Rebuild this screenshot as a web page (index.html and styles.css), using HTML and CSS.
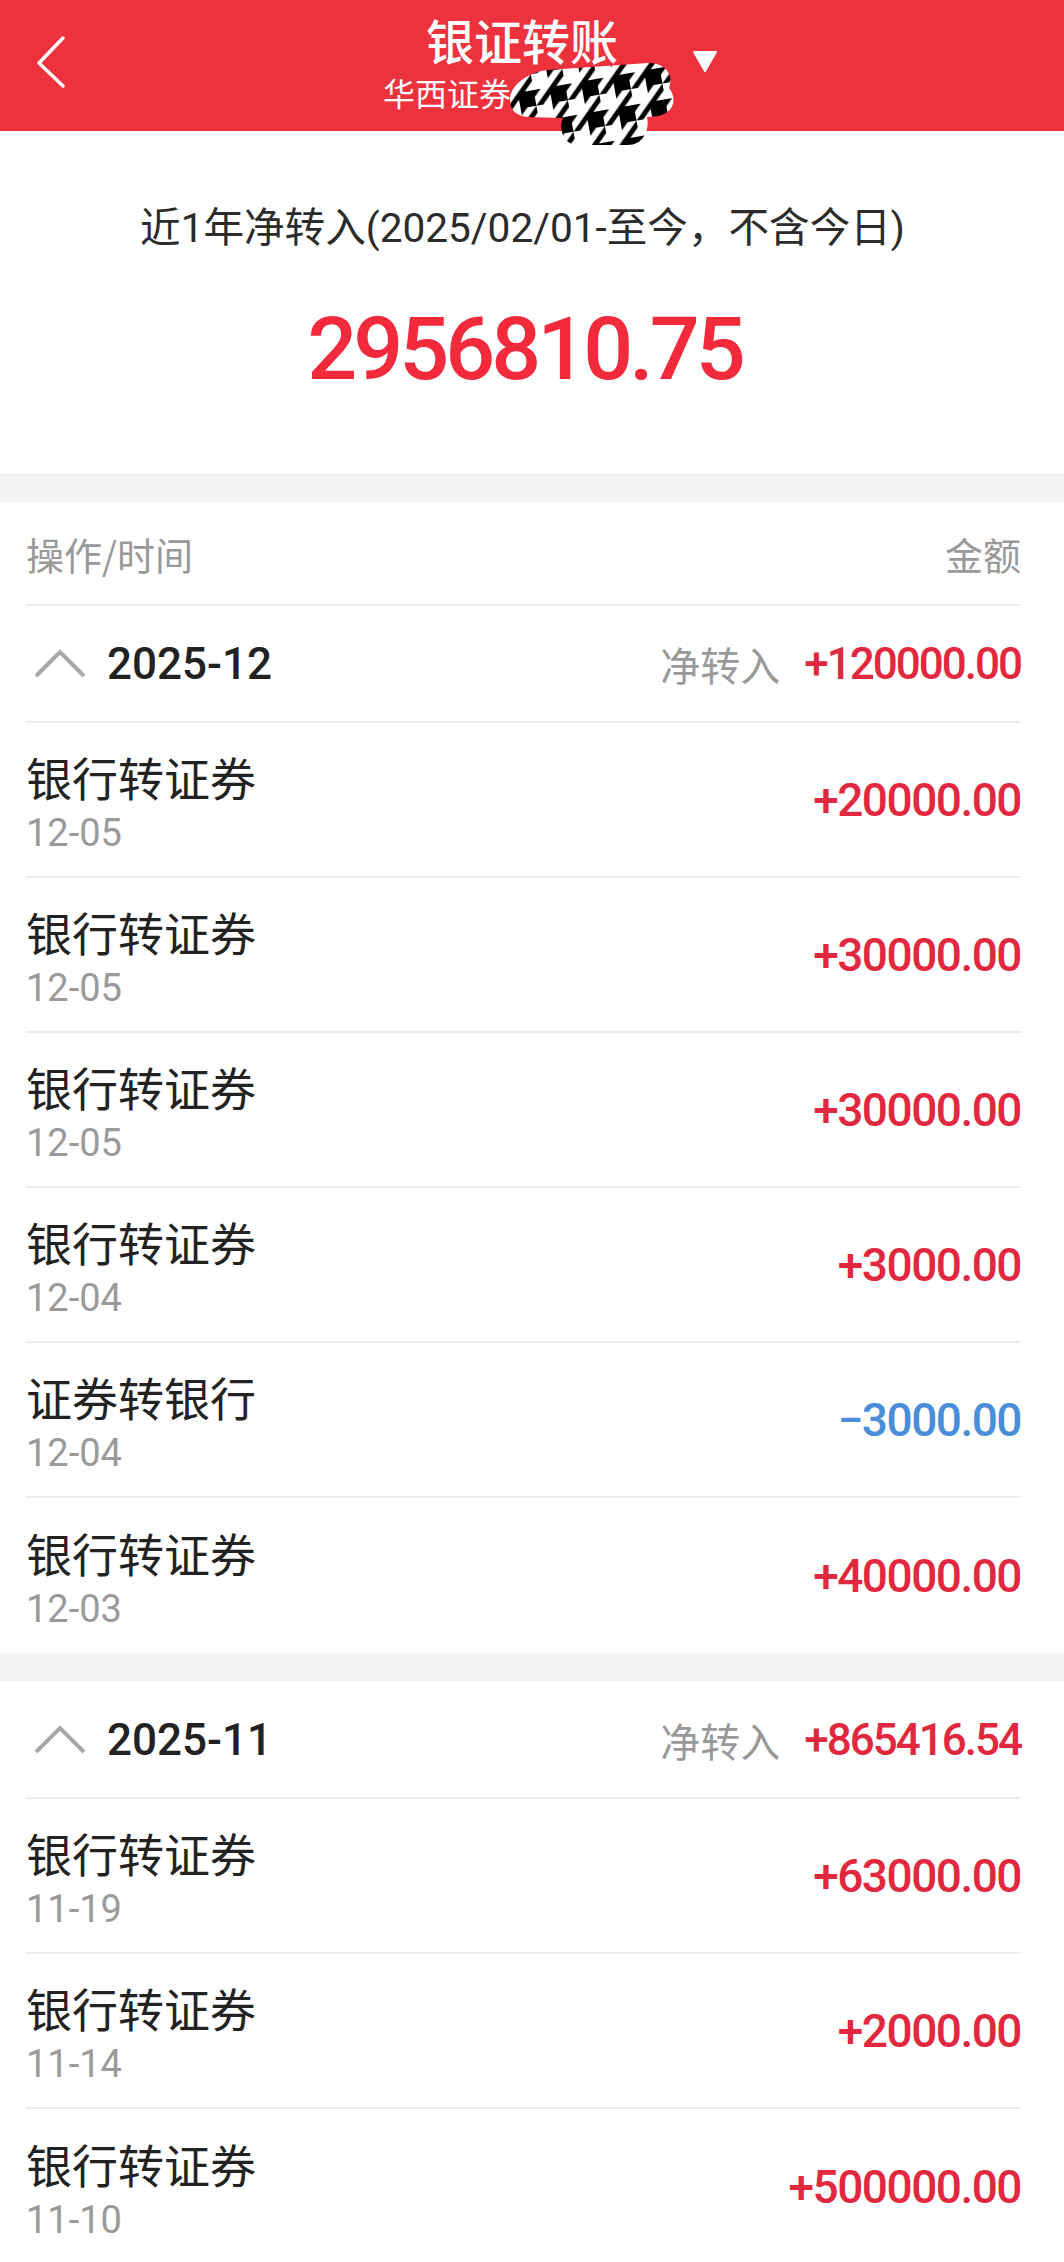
FILE: index.html
```html
<!DOCTYPE html>
<html lang="zh-CN">
<head>
<meta charset="utf-8">
<title>银证转账</title>
<link rel="stylesheet" href="styles.css">
</head>
<body>
<header class="topbar">
  <div class="topbar-left">
    <svg class="back" width="40" height="60" viewBox="0 0 40 60"><polyline points="31,3 7,28 31,51" fill="none" stroke="#fff" stroke-width="3.5" stroke-linecap="round" stroke-linejoin="round"/></svg>
  </div>
  <div class="topbar-center">
    <div class="title-col">
      <div class="title">银证转账</div>
      <div class="subtitle">华西证券<span class="redact"><svg class="redact-art" width="170" height="90" viewBox="0 0 170 90">
        <defs>
          <pattern id="hound" width="32" height="32" patternUnits="userSpaceOnUse" patternTransform="rotate(-10) translate(4 2)">
            <rect width="32" height="32" fill="#fff"/>
            <rect x="0" y="0" width="16" height="16" fill="#000"/>
            <polygon points="16,16 32,0 32,7 23,16" fill="#000"/>
            <polygon points="16,0 23,0 16,7" fill="#000"/>
            <polygon points="0,32 16,16 16,23 7,32" fill="#000"/>
            <polygon points="0,16 7,16 0,23" fill="#000"/>
          </pattern>
          <clipPath id="blob">
            <path d="M 2 40 C 2 25, 20 12, 40 10 L 140 3 C 158 3, 166 15, 161 28 C 169 38, 167 52, 150 56 L 139 57 C 142 70, 135 85, 120 85 L 70 85 C 56 85, 50 70, 55 58 L 20 57 C 8 56, 2 50, 2 40 Z"/>
          </clipPath>
        </defs>
        <rect width="170" height="90" fill="url(#hound)" clip-path="url(#blob)"/>
      </svg></span></div>
    </div>
    <svg class="caret" width="26" height="23" viewBox="0 0 26 23"><polygon points="2,2 24,2 13,21" fill="#fff" stroke="#fff" stroke-width="2" stroke-linejoin="round"/></svg>
  </div>
  <div class="topbar-right"></div>
</header>

<section class="summary">
  <div class="summary-label">近1年净转入(2025/02/01-至今，不含今日)</div>
  <div class="summary-value">2956810.75</div>
</section>

<div class="gap"></div>

<section class="list">
  <div class="list-head">
    <span>操作/时间</span>
    <span>金额</span>
  </div>
  <div class="group-head">
    <div class="group-left">
      <svg class="fold" width="52" height="30" viewBox="0 0 52 30"><polyline points="2,27 26,3 50,27" fill="none" stroke="#a8a8a8" stroke-width="4"/></svg>
      <span class="month">2025-12</span>
    </div>
    <div class="group-right">
      <span class="net-label">净转入</span>
      <span class="net-value up">+120000.00</span>
    </div>
  </div>
  <div class="row">
    <div class="row-left"><div class="op">银行转证券</div><div class="date">12-05</div></div>
    <div class="amount up">+20000.00</div>
  </div>
  <div class="row">
    <div class="row-left"><div class="op">银行转证券</div><div class="date">12-05</div></div>
    <div class="amount up">+30000.00</div>
  </div>
  <div class="row">
    <div class="row-left"><div class="op">银行转证券</div><div class="date">12-05</div></div>
    <div class="amount up">+30000.00</div>
  </div>
  <div class="row">
    <div class="row-left"><div class="op">银行转证券</div><div class="date">12-04</div></div>
    <div class="amount up">+3000.00</div>
  </div>
  <div class="row">
    <div class="row-left"><div class="op">证券转银行</div><div class="date">12-04</div></div>
    <div class="amount down">−3000.00</div>
  </div>
  <div class="row">
    <div class="row-left"><div class="op">银行转证券</div><div class="date">12-03</div></div>
    <div class="amount up">+40000.00</div>
  </div>
</section>

<div class="gap"></div>

<section class="list">
  <div class="group-head">
    <div class="group-left">
      <svg class="fold" width="52" height="30" viewBox="0 0 52 30"><polyline points="2,27 26,3 50,27" fill="none" stroke="#a8a8a8" stroke-width="4"/></svg>
      <span class="month">2025-11</span>
    </div>
    <div class="group-right">
      <span class="net-label">净转入</span>
      <span class="net-value up">+865416.54</span>
    </div>
  </div>
  <div class="row">
    <div class="row-left"><div class="op">银行转证券</div><div class="date">11-19</div></div>
    <div class="amount up">+63000.00</div>
  </div>
  <div class="row">
    <div class="row-left"><div class="op">银行转证券</div><div class="date">11-14</div></div>
    <div class="amount up">+2000.00</div>
  </div>
  <div class="row">
    <div class="row-left"><div class="op">银行转证券</div><div class="date">11-10</div></div>
    <div class="amount up">+500000.00</div>
  </div>
</section>
</body>
</html>
```

FILE: styles.css
```css
* { box-sizing: border-box; }

html, body {
  margin: 0;
  padding: 0;
  background: #fff;
}

body {
  font-family: Roboto, "Noto Sans CJK SC", sans-serif;
  color: #222;
}

/* ---------- top bar ---------- */
.topbar {
  position: relative;
  z-index: 2;
  height: 131px;
  background: #ee323d;
  display: grid;
  grid-template-columns: 1fr auto 1fr;
  align-items: start;
}

.topbar-left {
  padding: 35px 0 0 32px;
}

.back { display: block; }

.topbar-center {
  margin-left: 31px;
  display: flex;
  align-items: flex-start;
}

.title-col {
  width: 290px;
  text-align: center;
  color: #fff;
}

.title {
  margin-top: 11px;
  font-family: "Noto Sans CJK SC", sans-serif;
  font-size: 48px;
  font-weight: 500;
  line-height: 56px;
}

.subtitle {
  margin-top: 5px;
  font-family: "Noto Sans CJK SC", sans-serif;
  font-size: 32px;
  line-height: 40px;
  white-space: nowrap;
}

.redact {
  position: relative;
  display: inline-block;
  width: 150px;
  height: 40px;
  vertical-align: top;
}

.redact-art {
  position: absolute;
  left: -3px;
  top: -12px;
  display: block;
}

.caret {
  display: block;
  margin: 50px 0 0 25px;
}

/* ---------- summary ---------- */
.summary {
  height: 342px;
  padding: 72px 19px 0 0;
  text-align: center;
}

.summary-label {
  font-size: 40.6px;
  line-height: 50px;
  color: #2b2b2b;
}

.summary-value {
  margin-top: 46px;
  padding-left: 4px;
  font-size: 88px;
  line-height: 100px;
  font-weight: 500;
  letter-spacing: -4px;
  color: #f22a3c;
}

.gap {
  height: 29px;
  background: #f4f4f4;
}

/* ---------- list ---------- */
.list {
  margin: 0 43px 0 26px;
}

.list-head {
  height: 104px;
  display: flex;
  align-items: center;
  justify-content: space-between;
  border-bottom: 2px solid #ececec;
  font-family: "Noto Sans CJK SC", sans-serif;
  font-size: 38px;
  color: #999;
}

.group-head {
  height: 117px;
  display: flex;
  align-items: center;
  justify-content: space-between;
  border-bottom: 2px solid #ececec;
}

.group-left {
  display: flex;
  align-items: center;
}

.fold {
  display: block;
  margin-left: 8px;
}

.month {
  margin-left: 21px;
  font-size: 44px;
  font-weight: 500;
  color: #222;
}

.group-right {
  display: flex;
  align-items: center;
}

.net-label {
  font-family: "Noto Sans CJK SC", sans-serif;
  font-size: 40px;
  color: #999;
}

.net-value {
  margin-left: 24px;
  font-size: 44px;
  font-weight: 500;
  letter-spacing: -2px;
}

.row {
  height: 155px;
  display: flex;
  align-items: center;
  justify-content: space-between;
  border-bottom: 2px solid #ececec;
}

.row:last-child { border-bottom: 0; }

.row-left {
  padding-top: 8px;
}

.op {
  font-family: "Noto Sans CJK SC", sans-serif;
  font-size: 46px;
  line-height: 58px;
  color: #222;
}

.date {
  font-size: 38px;
  line-height: 56px;
  color: #9a9a9a;
}

.amount {
  font-size: 46px;
  font-weight: 500;
  letter-spacing: -1.5px;
}

.up { color: #e2283e; }
.down { color: #4a8ed9; }
```
